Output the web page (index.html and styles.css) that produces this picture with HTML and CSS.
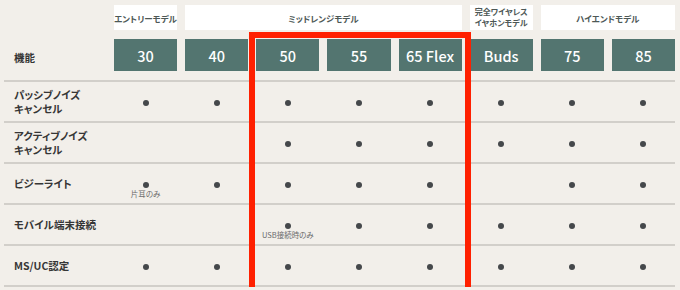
FILE: index.html
```html
<!DOCTYPE html>
<html lang="ja">
<head>
<meta charset="utf-8">
<link rel="stylesheet" href="styles.css">
</head>
<body>
<div class="table">
  <div class="row groups">
    <div></div>
    <div class="group">エントリーモデル</div>
    <div class="group span4">ミッドレンジモデル</div>
    <div class="group two">完全ワイヤレス<br>イヤホンモデル</div>
    <div class="group span2">ハイエンドモデル</div>
  </div>
  <div class="row models">
    <div class="label head">機能</div>
    <div class="model">30</div>
    <div class="model">40</div>
    <div class="model">50</div>
    <div class="model">55</div>
    <div class="model">65 Flex</div>
    <div class="model">Buds</div>
    <div class="model">75</div>
    <div class="model">85</div>
  </div>
  <div class="row feature">
    <div class="label">パッシブノイズ<br>キャンセル</div>
    <div class="cell"><span class="dot"></span></div>
    <div class="cell"><span class="dot"></span></div>
    <div class="cell"><span class="dot"></span></div>
    <div class="cell"><span class="dot"></span></div>
    <div class="cell"><span class="dot"></span></div>
    <div class="cell"><span class="dot"></span></div>
    <div class="cell"><span class="dot"></span></div>
    <div class="cell"><span class="dot"></span></div>
  </div>
  <div class="row feature">
    <div class="label">アクティブノイズ<br>キャンセル</div>
    <div class="cell"></div>
    <div class="cell"></div>
    <div class="cell"><span class="dot"></span></div>
    <div class="cell"><span class="dot"></span></div>
    <div class="cell"><span class="dot"></span></div>
    <div class="cell"><span class="dot"></span></div>
    <div class="cell"><span class="dot"></span></div>
    <div class="cell"><span class="dot"></span></div>
  </div>
  <div class="row feature">
    <div class="label">ビジーライト</div>
    <div class="cell"><span class="dot"><span class="note">片耳のみ</span></span></div>
    <div class="cell"><span class="dot"></span></div>
    <div class="cell"><span class="dot"></span></div>
    <div class="cell"><span class="dot"></span></div>
    <div class="cell"><span class="dot"></span></div>
    <div class="cell"></div>
    <div class="cell"><span class="dot"></span></div>
    <div class="cell"><span class="dot"></span></div>
  </div>
  <div class="row feature">
    <div class="label">モバイル端末接続</div>
    <div class="cell"></div>
    <div class="cell"></div>
    <div class="cell"><span class="dot"><span class="note">USB接続時のみ</span></span></div>
    <div class="cell"><span class="dot"></span></div>
    <div class="cell"><span class="dot"></span></div>
    <div class="cell"><span class="dot"></span></div>
    <div class="cell"><span class="dot"></span></div>
    <div class="cell"><span class="dot"></span></div>
  </div>
  <div class="row feature last">
    <div class="label">MS/UC認定</div>
    <div class="cell"><span class="dot"></span></div>
    <div class="cell"><span class="dot"></span></div>
    <div class="cell"><span class="dot"></span></div>
    <div class="cell"><span class="dot"></span></div>
    <div class="cell"><span class="dot"></span></div>
    <div class="cell"><span class="dot"></span></div>
    <div class="cell"><span class="dot"></span></div>
    <div class="cell"><span class="dot"></span></div>
  </div>
  <div class="highlight"></div>
</div>
</body>
</html>
```

FILE: styles.css
```css
html, body {
  margin: 0;
  padding: 0;
  background: #f2efea;
  overflow: hidden;
}
body {
  font-family: "Noto Sans CJK JP", "Noto Sans", sans-serif;
  font-feature-settings: "palt";
  color: #333;
}
.table {
  position: relative;
  width: 671px;
  margin-left: 4px;
  padding-top: 5px;
}
.row {
  display: grid;
  grid-template-columns: 102px repeat(8, 1fr);
  column-gap: 8px;
}
.groups {
  height: 25px;
  margin-bottom: 9px;
}
.group {
  background: #fff;
  display: flex;
  align-items: center;
  justify-content: center;
  text-align: center;
  font-size: 8.5px;
  line-height: 10px;
  font-weight: 700;
  color: #4d5856;
}
.group.two {
  font-size: 8px;
  line-height: 10.5px;
}
.span4 { grid-column: span 4; }
.span2 { grid-column: span 2; }
.models {
  height: 41px;
}
.model {
  height: 32px;
  background: #537570;
  color: #fff;
  display: flex;
  align-items: center;
  justify-content: center;
  font-size: 14.5px;
  font-weight: 500;
}
.label {
  padding-left: 10px;
  font-size: 10.5px;
  line-height: 14px;
  font-weight: 700;
  color: #363636;
  align-self: center;
}
.label.head {
  padding-bottom: 3px;
}
.feature {
  height: 39px;
  border-top: 2px solid #d2cfca;
}
.feature.last {
  border-bottom: 2px solid #d2cfca;
}
.cell {
  display: flex;
  align-items: center;
  justify-content: center;
  padding-top: 2px;
}
.dot {
  position: relative;
  width: 6px;
  height: 6px;
  border-radius: 50%;
  background: #45484b;
}
.note {
  position: absolute;
  top: 7px;
  left: 50%;
  transform: translateX(-50%);
  white-space: nowrap;
  font-size: 7.5px;
  line-height: 9px;
  color: #6a6a6a;
}
.highlight {
  position: absolute;
  left: 245px;
  top: 32px;
  width: 210px;
  height: 252px;
  border: 6px solid #ff2000;
}
```
